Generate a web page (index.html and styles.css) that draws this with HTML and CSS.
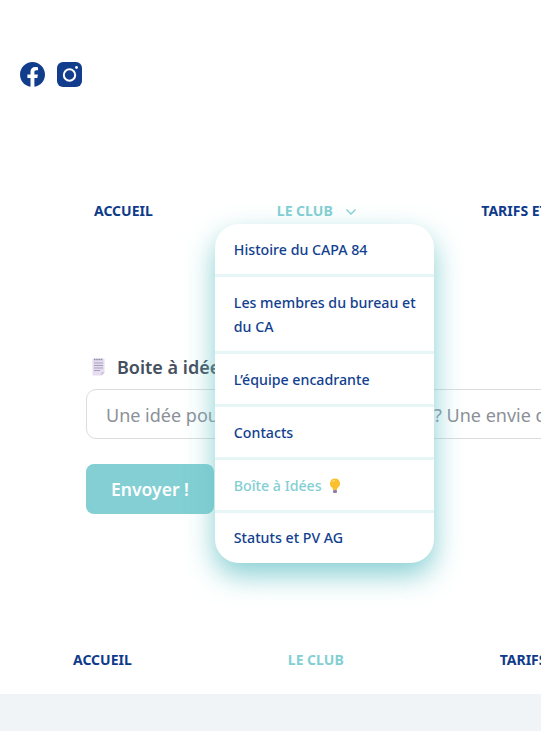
FILE: index.html
```html
<!DOCTYPE html>
<html lang="fr">
<head>
<meta charset="utf-8">
<title>CAPA 84</title>
<link rel="stylesheet" href="styles.css">
</head>
<body>
<div class="page">
  <div class="social">
    <a class="social-link" href="#">
      <svg viewBox="0 0 25 25" width="25" height="25"><path fill="#123c8c" d="M25 12.500C25 5.600 19.400 0 12.500 0S0 5.600 0 12.500c0 6.200 4.600 11.400 10.500 12.300v-8.700H7.400v-3.600h3.100V9.800c0-3.100 1.900-4.900 4.700-4.900 1.400 0 2.800.3 2.800.3v3h-1.600c-1.500 0-2 1-2 1.900v2.400h3.500l-.6 3.600h-2.900v8.700C20.400 23.900 25 18.700 25 12.500z"/></svg>
    </a>
    <a class="social-link" href="#">
      <svg viewBox="0 0 25 25" width="25" height="25"><rect width="25" height="25" rx="6" fill="#123c8c"/><circle cx="12.500" cy="13" r="5.700" fill="none" stroke="#fff" stroke-width="2"/><circle cx="19.500" cy="5.500" r="1.400" fill="#fff"/></svg>
    </a>
  </div>

  <nav class="nav nav-top">
    <a class="nav-link" href="#">ACCUEIL</a>
    <div class="nav-drop">
      <a class="nav-link active" href="#">LE CLUB
        <svg class="chevron" viewBox="0 0 12 8" width="12" height="8"><path d="M1.500 1.500 6 6l4.500-4.500" fill="none" stroke="#83cfd3" stroke-width="1.300"/></svg>
      </a>
      <ul class="menu">
        <li><a href="#">Histoire du CAPA 84</a></li>
        <li><a href="#">Les membres du bureau et du CA</a></li>
        <li><a href="#">L’équipe encadrante</a></li>
        <li><a href="#">Contacts</a></li>
        <li><a class="current" href="#">Boîte à Idées
          <svg class="bulb" viewBox="0 0 12 16" width="12" height="16"><path d="M6 .5a5 5 0 0 0-3 9c.8.700 1 1.500 1 2.500h4c0-1 .2-1.800 1-2.500a5 5 0 0 0-3-9z" fill="#fbc02d"/><path d="M3.800 4a2.500 2.500 0 0 1 2-1.800" fill="none" stroke="#ffe9a8" stroke-width="1"/><rect x="4" y="12" width="4" height="3" rx="1" fill="#8d7fa8"/></svg>
        </a></li>
        <li><a href="#">Statuts et PV AG</a></li>
      </ul>
    </div>
    <a class="nav-link" href="#">TARIFS ET INSCRIPTIONS</a>
  </nav>

  <form class="idea-form">
    <label class="idea-label" for="idea">
      <svg viewBox="0 0 13 18" width="13" height="18"><path d="M.5.500h12v14l-3 3H.500z" fill="#e6def0"/><path d="M2 1.500h9" stroke="#8f86a0" stroke-width="1.500" stroke-dasharray="1.500 .7"/><path d="M2 5h9M2 7.500h9M2 10h9M2 12.500h6" stroke="#a79fb8" stroke-width="1"/><path d="M9.500 17.500v-3h3z" fill="#c4b8d6"/></svg>
      Boite à idées
    </label>
    <input class="idea-input" id="idea" type="text" placeholder="Une idée pour faire bouger le CAPA 84 ? Une envie de sortie ?">
    <button class="idea-send" type="button">Envoyer !</button>
  </form>

  <nav class="nav nav-bottom">
    <a class="nav-link" href="#">ACCUEIL</a>
    <a class="nav-link active" href="#">LE CLUB</a>
    <a class="nav-link" href="#">TARIFS ET INSCRIPTIONS</a>
  </nav>
  <div class="band"></div>
</div>
</body>
</html>
```

FILE: styles.css
```css
html, body {margin: 0; padding: 0; height: 100%; background: #fff; overflow: hidden;}
body {font-family: "Noto Sans", "Open Sans", sans-serif; color: #123c8c;}
a {color: inherit; text-decoration: none;}

.page {width: 541px; height: 731px; display: flex; flex-direction: column; overflow: hidden;}

.social {display: flex; gap: 12px; padding: 62px 0 0 20px; height: 25px;}
.social-link {display: block; height: 25px;}

.nav {display: flex; white-space: nowrap; font-size: 14px; font-weight: 700; line-height: 20px; color: #0e3a8a;}
.nav-top {gap: 124px; padding: 114px 0 0 94px;}
.nav-bottom {gap: 156px; padding: 0 0 0 73px; margin-top: 136px;}
.nav-link.active {color: #83cfd3;}
.nav-drop {position: relative;}
.chevron {margin-left: 9px;}

.menu {position: absolute; left: -62px; top: 23px; width: 219px; margin: 0; padding: 0; list-style: none; background: #fff; border-radius: 24px; box-shadow: 0 12px 28px rgba(105, 195, 200, .8); font-size: 14.2px; font-weight: 500; white-space: normal; color: #123f8f; z-index: 5;}
.menu li {border-bottom: 3px solid #e6f5f5;}
.menu li:last-child {border-bottom: 0;}
.menu a {display: block; padding: 14px 14px 12px 19px; line-height: 24px;}
.menu li:last-child a {padding: 13px 19px;}
.menu a.current {color: #83cfd3;}
.bulb {margin-left: 4px; vertical-align: -3px;}

.idea-form {display: flex; flex-direction: column; align-items: flex-start; padding: 133px 0 0 86px;}
.idea-label {display: flex; align-items: center; gap: 12px; padding-left: 6px; font-size: 18px; font-weight: 600; line-height: 26px; color: #454f5e; white-space: nowrap;}
.idea-input {width: 560px; height: 50px; box-sizing: border-box; margin-top: 9px; padding: 2px 19px 0; flex: none; border: 1px solid #dcdcdc; border-radius: 10px; font: 18px "Noto Sans", "Open Sans", sans-serif; background: #fff;}
.idea-input::placeholder {color: #8b9098; opacity: 1;}
.idea-send {width: 128px; height: 50px; margin-top: 25px; border: 0; border-radius: 8px; background: #83cfd3; color: #fff; font: 600 17.5px "Noto Sans", "Open Sans", sans-serif;}

.band {flex: 1; margin-top: 24px; background: #f0f4f7;}
```
